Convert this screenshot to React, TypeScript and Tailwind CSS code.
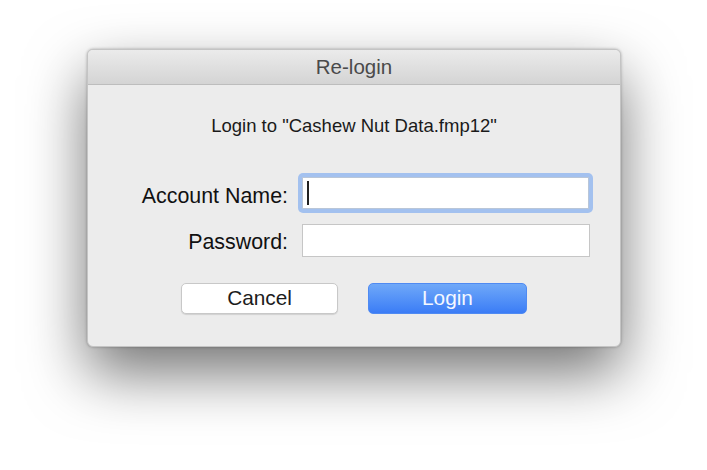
export default function App() {
  return (
    <div className="w-[707px] h-[470px] bg-white pt-[49px] pl-[87px] font-['Liberation_Sans',Arial,sans-serif]">
      {/* Dialog window */}
      <div className="w-[534px] h-[298px] rounded-[6px] bg-[#ececec] border border-[#c4c4c4] shadow-[0_26px_60px_rgba(0,0,0,0.55),0_0_3px_rgba(0,0,0,0.3)] flex flex-col overflow-hidden">
        {/* Title bar */}
        <div className="h-[35px] shrink-0 bg-gradient-to-b from-[#ebebeb] to-[#d4d4d4] border-b border-[#bdbdbd] flex items-center justify-center">
          <span className="text-[20.5px] text-[#4a4a4a]">Re-login</span>
        </div>

        {/* Body */}
        <div className="flex flex-col">
          <p className="mt-[30px] h-[22px] leading-[22px] text-center text-[18.5px] text-[#1a1a1a]">
            Login to "Cashew Nut Data.fmp12"
          </p>

          <div className="mt-[36px] h-[40px] flex items-center">
            <label className="w-[200px] pt-[5px] leading-[24px] text-right text-[21.4px] text-[#111]">Account Name:</label>
            <div className="ml-[10px] p-[4px] rounded-[5px] bg-[#a3c1ef]">
              <div className="w-[287px] h-[32px] bg-white border border-[#b9c6d8] flex items-center pl-[4px]">
                <div className="w-[2px] h-[24px] bg-[#222]" />
              </div>
            </div>
          </div>

          <div className="mt-[11px] h-[33px] flex items-center">
            <label className="w-[200px] pt-[3px] leading-[24px] text-right text-[21.4px] text-[#111]">Password:</label>
            <div className="ml-[14px] w-[288px] h-[33px] bg-white border border-[#c6c6c6]" />
          </div>

          <div className="mt-[26px] flex justify-center gap-[30px]">
            <button className="w-[157px] h-[31px] rounded-[5px] bg-white border border-[#c8c8c8] shadow-[0_1px_1px_rgba(0,0,0,0.12)] text-[20.8px] text-[#1c1c1c] leading-none">
              Cancel
            </button>
            <button className="w-[159px] h-[31px] rounded-[5px] bg-gradient-to-b from-[#6fa8f8] to-[#3b7cf6] border border-[#4f8af2] text-[20.8px] text-[#f4f8ff] leading-none">
              Login
            </button>
          </div>
        </div>
      </div>
    </div>
  );
}
